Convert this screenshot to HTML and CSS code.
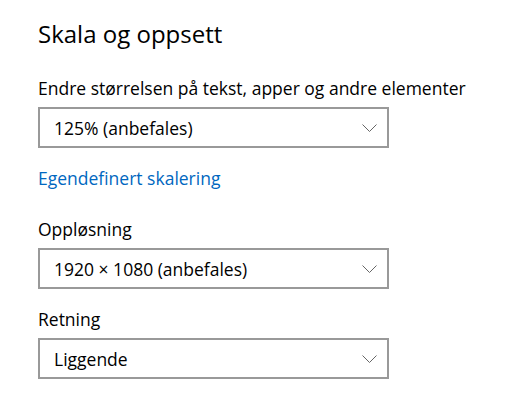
FILE: index.html
```html
<!DOCTYPE html>
<html lang="no">
<head>
<meta charset="utf-8">
<link rel="stylesheet" href="styles.css">
</head>
<body>
<main class="page">
  <h1 class="title">Skala og oppsett</h1>

  <div class="field">
    <div class="label">Endre størrelsen på tekst, apper og andre elementer</div>
    <div class="combo">
      <span class="combo-text">125% (anbefales)</span>
      <svg class="chev" width="15" height="9" viewBox="0 0 15 9"><polyline points="0.5,0.5 7.5,7.5 14.5,0.5" fill="none" stroke="#666" stroke-width="1"/></svg>
    </div>
  </div>

  <a class="link" href="#">Egendefinert skalering</a>

  <div class="field field-res">
    <div class="label">Oppløsning</div>
    <div class="combo">
      <span class="combo-text">1920 × 1080 (anbefales)</span>
      <svg class="chev" width="15" height="9" viewBox="0 0 15 9"><polyline points="0.5,0.5 7.5,7.5 14.5,0.5" fill="none" stroke="#666" stroke-width="1"/></svg>
    </div>
  </div>

  <div class="field field-dir">
    <div class="label">Retning</div>
    <div class="combo">
      <span class="combo-text">Liggende</span>
      <svg class="chev" width="15" height="9" viewBox="0 0 15 9"><polyline points="0.5,0.5 7.5,7.5 14.5,0.5" fill="none" stroke="#666" stroke-width="1"/></svg>
    </div>
  </div>
</main>
</body>
</html>
```

FILE: styles.css
```css
html, body {
  margin: 0;
  padding: 0;
  background: #ffffff;
}
body {
  font-family: "Open Sans", "Noto Sans", sans-serif;
  color: #000000;
}
.page {
  display: flex;
  flex-direction: column;
  align-items: flex-start;
  padding: 17px 0 0 38px;
}
.title {
  margin: 0;
  font-size: 24px;
  font-weight: 400;
  line-height: 34px;
}
.field {
  display: flex;
  flex-direction: column;
  margin-top: 27px;
}
.label {
  font-size: 17.5px;
  line-height: 20px;
}
.combo {
  box-sizing: border-box;
  width: 351px;
  height: 41px;
  margin-top: 9px;
  border: 2px solid #999999;
  display: flex;
  align-items: center;
  justify-content: space-between;
  padding: 0 10px 0 14px;
}
.combo-text {
  font-size: 17.5px;
  line-height: 20px;
}
.chev {
  display: block;
  margin-top: 1px;
}
.link {
  margin-top: 20px;
  font-size: 17.5px;
  line-height: 20px;
  color: #0067c0;
  text-decoration: none;
}
.field-res {
  margin-top: 31px;
}
.field-dir {
  margin-top: 20px;
}
```
